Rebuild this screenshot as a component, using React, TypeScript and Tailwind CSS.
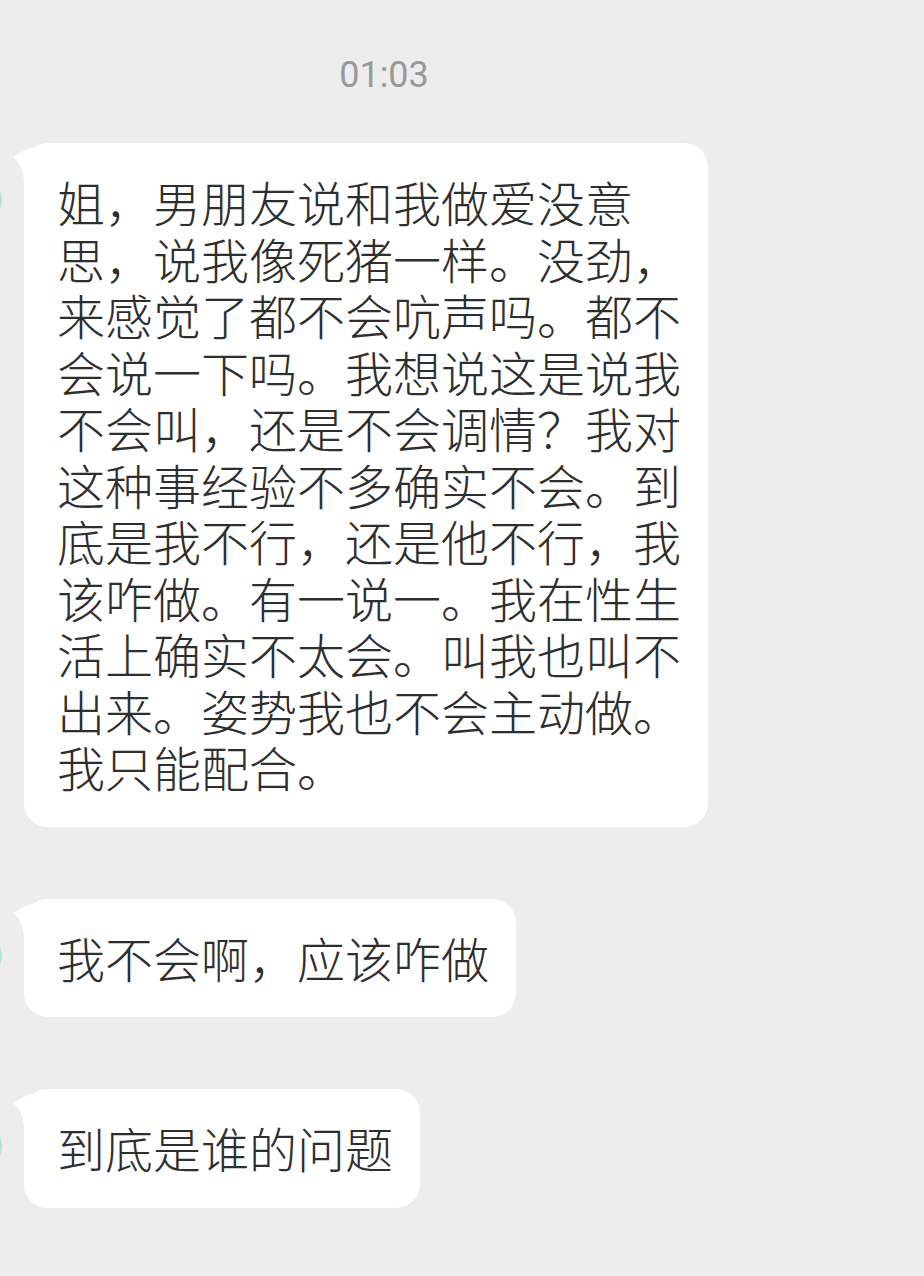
import React from "react";

const cjk = { fontFamily: '"Noto Sans CJK SC", "Noto Sans", sans-serif' };

function Tail() {
  return (
    <svg
      className="absolute left-[-12px] top-0"
      width="30"
      height="46"
      viewBox="0 0 30 46"
    >
      <path d="M1 14 Q 8 9 18 5 L 30 4 L 30 46 L 12 46 L 12 38 Q 11 21 1 14 Z" fill="#ffffff" />
    </svg>
  );
}

function Message({ lines }: { lines: string[] }) {
  return (
    <div className="flex items-start">
      <div className="ml-[-38px] mt-[37px] w-10 h-10 shrink-0 rounded-full bg-[#b3e2d1]" />
      <div className="relative ml-[22px] bg-white rounded-[24px] pl-[33px] pr-[27px] pt-[30px] pb-[32px]">
        <Tail />
        <div
          className="relative text-[48px] leading-[56.5px] font-light text-[#2e2e2e] whitespace-nowrap"
          style={cjk}
        >
          {lines.map((l, i) => (
            <div key={i}>{l}</div>
          ))}
        </div>
      </div>
    </div>
  );
}

export default function App() {
  return (
    <div className="w-[924px] h-[1276px] bg-[#ededed] overflow-hidden flex flex-col">
      <div className="w-[768px] pt-[57px] flex justify-center">
        <span
          className="text-[36px] leading-[36px] text-[#999999]"
          style={{ fontFamily: "Roboto, 'Liberation Sans', sans-serif" }}
        >
          01:03
        </span>
      </div>
      <div className="mt-[50px] flex flex-col gap-[72px]">
        <Message
          lines={[
            "姐，男朋友说和我做爱没意",
            "思，说我像死猪一样。没劲，",
            "来感觉了都不会吭声吗。都不",
            "会说一下吗。我想说这是说我",
            "不会叫，还是不会调情？我对",
            "这种事经验不多确实不会。到",
            "底是我不行，还是他不行，我",
            "该咋做。有一说一。我在性生",
            "活上确实不太会。叫我也叫不",
            "出来。姿势我也不会主动做。",
            "我只能配合。",
          ]}
        />
        <Message lines={["我不会啊，应该咋做"]} />
        <Message lines={["到底是谁的问题"]} />
      </div>
    </div>
  );
}
